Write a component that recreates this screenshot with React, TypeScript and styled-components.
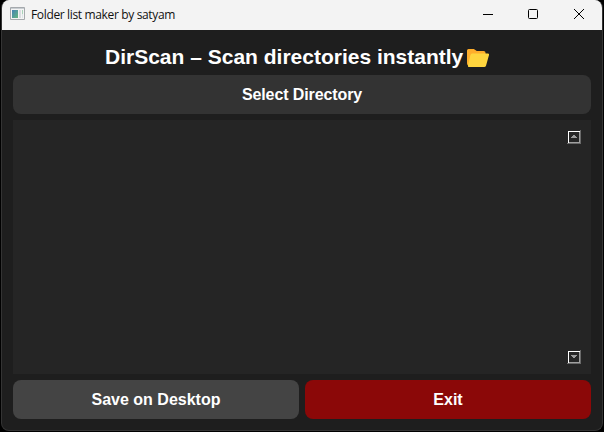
import React from "react";
import styled, { createGlobalStyle } from "styled-components";

const GlobalStyle = createGlobalStyle`
  * { box-sizing: border-box; }
  html, body { margin: 0; background: #000; overflow: hidden; }
`;

const Window = styled.div`
  width: 602px;
  height: 431px;
  margin-left: 1px;
  border: 1px solid #343434;
  border-top: 0;
  border-radius: 8px;
  background: #1e1e1e;
  overflow: hidden;
  display: flex;
  flex-direction: column;
  font-family: "Liberation Sans", Arial, sans-serif;
`;

const TitleBar = styled.header`
  height: 30px;
  flex: none;
  background: #f3f3f3;
  display: flex;
  align-items: center;
  padding-left: 8px;
`;

const AppIcon = styled.svg`
  width: 16px;
  height: 14px;
  margin-top: -2px;
  flex: none;
`;

const Caption = styled.span`
  margin-left: 5px;
  flex: 1;
  font: 12px/16px "Open Sans", "Noto Sans", sans-serif;
  letter-spacing: -0.35px;
  color: #111;
  white-space: nowrap;
`;

const CaptionButton = styled.button`
  width: 45.5px;
  height: 30px;
  padding: 0 0 2px;
  border: 0;
  background: none;
  display: flex;
  align-items: center;
  justify-content: center;
`;

const Content = styled.main`
  flex: 1;
  display: flex;
  flex-direction: column;
  padding: 10px 11px 11px;
`;

const Heading = styled.h1`
  margin: 0;
  height: 35px;
  padding-left: 92px;
  padding-bottom: 2px;
  display: flex;
  align-items: center;
  font-size: 21px;
  line-height: 33px;
  font-weight: 700;
  color: #fff;
  white-space: nowrap;
`;

const FolderIcon = styled.svg`
  width: 22.5px;
  height: 20px;
  margin: 2px 0 0 4px;
  flex: none;
`;

const Button = styled.button<{ $color: string; $tracking?: number }>`
  height: 39px;
  flex: none;
  padding: 0;
  border: 0;
  border-radius: 8px;
  background: ${(p) => p.$color};
  color: #fff;
  font: 700 16px/39px "Liberation Sans", Arial, sans-serif;
  letter-spacing: ${(p) => p.$tracking ?? 0}px;
`;

const ListPanel = styled.section`
  height: 254px;
  margin: 6px 0;
  padding: 10px 10px 10px 0;
  background: #252525;
  display: flex;
  flex-direction: column;
  justify-content: space-between;
  align-items: flex-end;
`;

const ScrollButton = styled.button`
  width: 14px;
  height: 14px;
  padding: 0;
  border: 0;
  background: none;
  display: flex;
`;

const Actions = styled.footer`
  display: grid;
  grid-template-columns: 1fr 1fr;
  gap: 6px;
`;

function ScrollArrow({ down = false }: { down?: boolean }) {
  return (
    <ScrollButton aria-label={down ? "Scroll down" : "Scroll up"}>
      <svg width="14" height="14" shapeRendering="crispEdges">
        <path d="M0 13H14V14H0ZM13 0H14V14H13Z" fill="#696969" />
        <path d="M1 12H13V13H1ZM12 1H13V13H12Z" fill="#a0a0a0" />
        <path d="M1 1H13V2H1ZM1 1H2V13H1Z" fill="#fff" />
        {down ? (
          <path d="M4 5H10V6H4ZM5 6H9V7H5ZM6 7H8V8H6Z" fill="#9a9a9a" />
        ) : (
          <path d="M6 5H8V6H6ZM5 6H9V7H5ZM4 7H10V8H4Z" fill="#9a9a9a" />
        )}
      </svg>
    </ScrollButton>
  );
}

export default function App() {
  return (
    <>
      <GlobalStyle />
      <Window>
        <TitleBar>
          <AppIcon viewBox="0 0 16 14">
            <defs>
              <linearGradient id="screen" x1="0" y1="0" x2="1" y2="1">
                <stop offset="0" stopColor="#4582b5" />
                <stop offset="1" stopColor="#63b780" />
              </linearGradient>
            </defs>
            <path d="M.5.5h14v12H.5z" fill="#f4f4f4" stroke="#a5a9ad" />
            <path d="M1 1h13v1H1z" fill="#c8cdd1" />
            <path d="M2 3h6v8H2z" fill="url(#screen)" />
            <path d="M9 3h2v8H9z" fill="#d9dde1" />
            <path d="M12 3h1v4h-1z" fill="#a8d3b8" />
            <path d="M12 7h1v4h-1z" fill="#dce5e8" />
          </AppIcon>
          <Caption>Folder list maker by satyam</Caption>
          <CaptionButton aria-label="Minimize">
            <svg width="12" height="12"><path d="M1 6.5h10" stroke="#000" /></svg>
          </CaptionButton>
          <CaptionButton aria-label="Maximize">
            <svg width="12" height="12"><rect x="0.5" y="1.5" width="9" height="9" rx="1" fill="none" stroke="#000" /></svg>
          </CaptionButton>
          <CaptionButton aria-label="Close">
            <svg width="12" height="12"><path d="M1 1l10 10M11 1L1 11" stroke="#000" /></svg>
          </CaptionButton>
        </TitleBar>
        <Content>
          <Heading>
            DirScan – Scan directories instantly
            <FolderIcon viewBox="0 0 23 20" preserveAspectRatio="none">
              <path d="M0 2.5Q0 1 1.5 1H7l3 2h7q2 0 2 2v13H3q-3 0-3-3z" fill="#ffae2b" />
              <path d="M5 5.500h16.5q1.500 0 1 1.500l-3 10.500q-.5 1.500-2 1.500H2Q.6 19 1 17.500L3.500 7Q4 5.500 5 5.500z" fill="#ffd53e" />
            </FolderIcon>
          </Heading>
          <Button $color="#333333" $tracking={-0.1}>Select Directory</Button>
          <ListPanel>
            <ScrollArrow />
            <ScrollArrow down />
          </ListPanel>
          <Actions>
            <Button $color="#444444">Save on Desktop</Button>
            <Button $color="#8b0808">Exit</Button>
          </Actions>
        </Content>
      </Window>
    </>
  );
}
